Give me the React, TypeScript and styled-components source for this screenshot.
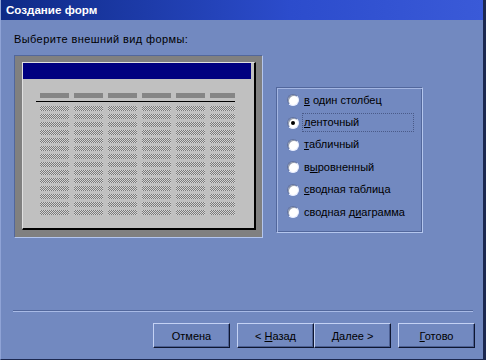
import React from 'react';
import styled, { createGlobalStyle } from 'styled-components';

const Global = createGlobalStyle`
  html, body { margin: 0; padding: 0; background: #7289c0; }
  body { font-family: "Liberation Sans", Arial, sans-serif; }
`;

const Window = styled.div`
  width: 486px;
  height: 360px;
  box-sizing: border-box;
  background: #7289c0;
  display: flex;
  flex-direction: column;
  border-left: 1px solid #8fa3d6;
  border-right: 3px solid #1c2850;
  border-bottom: 1px solid #1c2850;
  overflow: hidden;
`;

const TitleBar = styled.div`
  height: 20px;
  flex: none;
  background: linear-gradient(to right, #0e2a86, #2c4ccc 60%, #3a5ad8);
  color: #fff;
  font-weight: bold;
  font-size: 11.6px;
  line-height: 20px;
  padding-left: 5px;
`;

const Body = styled.div`
  padding: 0 0 0 13px;
  flex: 1;
  display: flex;
  flex-direction: column;
`;

const Prompt = styled.div`
  margin-top: 13px;
  font-size: 11px;
  line-height: 13px;
  letter-spacing: 0.4px;
  color: #000;
`;

const ContentRow = styled.div`
  display: flex;
  align-items: flex-start;
  margin-top: 9px;
  gap: 13px;
`;

const PreviewFrame = styled.div`
  width: 249px;
  height: 183px;
  box-sizing: border-box;
  border: 1px solid;
  border-color: #52679c #b4c6ee #b4c6ee #52679c;
  background: #808080;
  padding: 6px 6px 7px 7px;
  display: flex;
`;

const PreviewPanel = styled.div`
  flex: 1;
  background: #c0c0c0;
  border-top: 1px solid #e0e0e0;
  border-left: 1px solid #e0e0e0;
  border-right: 2px solid #000;
  border-bottom: 2px solid #000;
  padding: 0 3px 0 0;
  display: flex;
  flex-direction: column;
`;

const MiniTitle = styled.div`
  height: 16px;
  background: #000080;
`;

const MiniGrid = styled.div`
  margin: 14px 0 0 17px;
  display: grid;
  grid-template-columns: repeat(5, 29px) 25px;
  column-gap: 5px;
  row-gap: 3px;
  width: 195px;
`;

const HeadCell = styled.div`
  height: 5px;
  background: #858585;
`;

const HeadRule = styled.div`
  grid-column: 1 / -1;
  height: 1px;
  background: #000;
  margin: 0 0 1px -4px;
  width: 199px;
`;

const DataCell = styled.div`
  height: 5px;
  background: repeating-conic-gradient(#7a7a7a 0 25%, #d4d4d4 0 50%) 0 0 / 2px 2px;
`;

const GroupBox = styled.div`
  margin-top: 32px;
  width: 147px;
  height: 146px;
  box-sizing: border-box;
  border: 1px solid;
  border-color: #52679c #b4c6ee #b4c6ee #52679c;
  box-shadow: inset 1px 1px 0 #a4b6e2, inset -1px -1px 0 #52679c;
  padding: 1px 0 0 10px;
  display: flex;
  flex-direction: column;
`;

const RadioRow = styled.div`
  height: 22.4px;
  display: flex;
  align-items: center;
  gap: 3px;
  font-size: 11px;
  color: #000;
`;

const RadioDot = styled.span<{ $on?: boolean }>`
  width: 12px;
  height: 12px;
  flex: none;
  box-sizing: border-box;
  border-radius: 50%;
  background: #fff;
  border: 1px solid;
  border-color: #5c6e9e #e8eeff #e8eeff #5c6e9e;
  box-shadow: inset 1px 1px 0 #9098a8;
  display: flex;
  align-items: center;
  justify-content: center;
  &::after {
    content: '';
    width: 4px;
    height: 4px;
    border-radius: 50%;
    background: #000;
    display: ${(p) => (p.$on ? 'block' : 'none')};
  }
`;

const RadioLabel = styled.span<{ $focus?: boolean }>`
  box-sizing: border-box;
  height: 19px;
  line-height: 17px;
  padding: 0 1px;
  width: ${(p) => (p.$focus ? '112px' : 'auto')};
  border: 1px dotted ${(p) => (p.$focus ? '#4a5a88' : 'transparent')};
  white-space: nowrap;
`;

const Acc = styled.span`
  text-decoration: underline;
  text-underline-offset: 1px;
`;

const Spacer = styled.div`
  flex: 1;
`;

const Separator = styled.div`
  margin: 0 10px 0 12px;
  border-top: 1px solid #52679c;
  border-bottom: 1px solid #a8bae6;
`;

const ButtonRow = styled.div`
  display: flex;
  justify-content: flex-end;
  padding: 11px 8px 11px 0;
  flex: none;
`;

const Button = styled.button<{ $gap?: number }>`
  width: 77px;
  height: 25px;
  margin-left: ${(p) => p.$gap ?? 7}px;
  box-sizing: border-box;
  background: #7289c0;
  border: 1px solid;
  border-color: #c4d2f4 #0e1630 #0e1630 #c4d2f4;
  box-shadow: inset -1px -1px 0 #4c5f92;
  font-family: "Liberation Sans", Arial, sans-serif;
  font-size: 11px;
  color: #000;
  padding: 0;
`;

const PreviewForm: React.FC = () => {
  const cols = [0, 1, 2, 3, 4, 5];
  const rows = Array.from({ length: 14 }, (_, i) => i);
  return (
    <PreviewFrame>
      <PreviewPanel>
        <MiniTitle />
        <MiniGrid>
          {cols.map((c) => (
            <HeadCell key={'h' + c} />
          ))}
          <HeadRule />
          {rows.map((r) => cols.map((c) => <DataCell key={r + '-' + c} />))}
        </MiniGrid>
      </PreviewPanel>
    </PreviewFrame>
  );
};

const options: { pre: string; acc: string; post: string; on?: boolean }[] = [
  { pre: '', acc: 'в', post: ' один столбец' },
  { pre: '', acc: 'л', post: 'енточный', on: true },
  { pre: '', acc: 'т', post: 'абличный' },
  { pre: 'в', acc: 'ы', post: 'ровненный' },
  { pre: '', acc: 'с', post: 'водная таблица' },
  { pre: 'сводная д', acc: 'и', post: 'аграмма' },
];

export default function App() {
  return (
    <>
      <Global />
      <Window>
        <TitleBar>Создание форм</TitleBar>
        <Body>
          <Prompt>Выберите внешний вид формы:</Prompt>
          <ContentRow>
            <PreviewForm />
            <GroupBox>
              {options.map((o, i) => (
                <RadioRow key={i}>
                  <RadioDot $on={o.on} />
                  <RadioLabel $focus={o.on}>
                    {o.pre}
                    <Acc>{o.acc}</Acc>
                    {o.post}
                  </RadioLabel>
                </RadioRow>
              ))}
            </GroupBox>
          </ContentRow>
        </Body>
        <Spacer />
        <Separator />
        <ButtonRow>
          <Button>Отмена</Button>
          <Button>
            &lt; <Acc>Н</Acc>азад
          </Button>
          <Button $gap={0}>
            <Acc>Д</Acc>алее &gt;
          </Button>
          <Button>
            <Acc>Г</Acc>отово
          </Button>
        </ButtonRow>
      </Window>
    </>
  );
}
